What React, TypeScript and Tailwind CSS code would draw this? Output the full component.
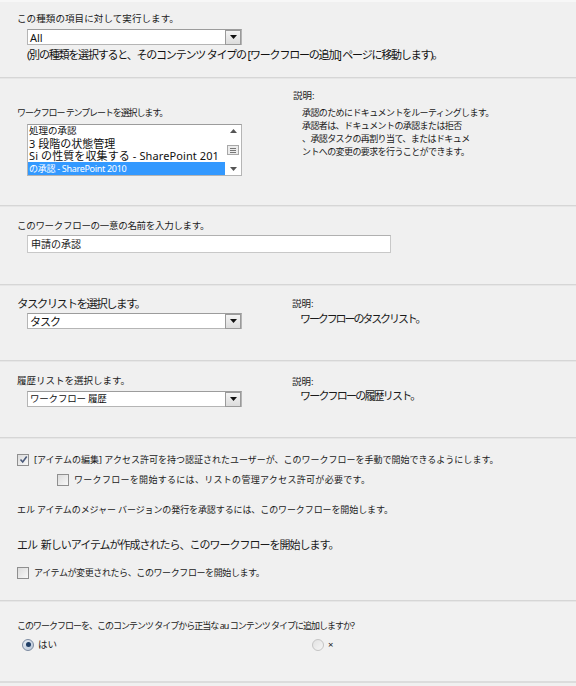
import React from "react";

const F = "font-['Noto_Sans','Noto_Sans_CJK_JP',sans-serif]";

function Sep() {
  return (
    <div className="h-[2px] border-t border-[#d6d6d6] border-b border-b-[#e6e6e6]" />
  );
}

function Arrow() {
  return (
    <div className="w-[16px] h-[15px] border border-[#9a9a9a] bg-gradient-to-b from-[#f4f4f4] to-[#dcdcdc] flex items-center justify-center">
      <svg width="7" height="4" viewBox="0 0 7 4">
        <path d="M0 0 H7 L3.5 4 Z" fill="#111" />
      </svg>
    </div>
  );
}

function Select({ text, cls = "" }: { text: string; cls?: string }) {
  return (
    <div className="w-[215px] h-[16px] flex items-center bg-white border border-[#b5b5b5] border-t-[#9c9c9c] pr-0">
      <span className={`flex-1 pl-[2px] text-[#111] leading-none ${cls}`}>{text}</span>
      <Arrow />
    </div>
  );
}

function Checkbox({ checked = false }: { checked?: boolean }) {
  return (
    <div className="w-[12px] h-[12px] border border-[#8f8f8f] bg-gradient-to-br from-[#dcdcdc] to-[#f8f8f8] flex items-center justify-center shrink-0">
      {checked && (
        <svg width="9" height="9" viewBox="0 0 9 9">
          <path d="M1.5 4.5 L3.7 7 L7.7 1.5" stroke="#4a5a7a" strokeWidth="1.6" fill="none" />
        </svg>
      )}
    </div>
  );
}

function Radio({ checked = false }: { checked?: boolean }) {
  return (
    <div
      className={`w-[12px] h-[12px] rounded-full border flex items-center justify-center ${
        checked
          ? "border-[#7c8aa0] bg-gradient-to-br from-[#e8eef6] to-[#b9c6d6]"
          : "border-[#c4c4c4] bg-gradient-to-br from-[#e2e2e2] to-[#f6f6f6]"
      }`}
    >
      {checked && <div className="w-[5px] h-[5px] rounded-full bg-[#1f3e66]" />}
    </div>
  );
}

export default function App() {
  return (
    <div className={`w-[576px] h-[686px] bg-[#f0f0f0] text-[#1a1a1a] ${F} overflow-hidden`}>
      <div className="h-[2px] bg-[#f7f7f7]" />
      {/* Section 1 */}
      <div className="h-[75px] pl-[17px] pt-[10px]">
        <div className="text-[9.5px] leading-[13px] tracking-[0.1px]">この種類の項目に対して実行します。</div>
        <div className="ml-[10px] mt-[4px]">
          <Select text="All" cls="text-[11px]" />
        </div>
        <div className="ml-[10px] mt-[2px] text-[11px] leading-[16px] tracking-[-1.2px] text-[#111] whitespace-nowrap">
          (別の種類を選択すると、そのコンテンツ タイプの [ワークフローの追加] ページに移動します)。
        </div>
      </div>
      <Sep />
      {/* Section 2 */}
      <div className="h-[126px] flex">
        <div className="w-[276px] pl-[17px] pt-[27px]">
          <div className="text-[9px] leading-[13px] tracking-[-1.1px] whitespace-nowrap">ワークフロー テンプレートを選択します。</div>
          <div className="ml-[10px] mt-[5px] w-[215px] h-[52px] bg-white border border-[#b5b5b5] border-t-[#9c9c9c] flex">
            <div className="flex-1 flex flex-col overflow-hidden text-[#111]">
              <div className="h-[12px] flex items-center overflow-hidden text-[9.5px] leading-none pl-[1px] whitespace-nowrap">処理の承認</div>
              <div className="h-[12px] flex items-center overflow-hidden text-[11px] leading-none pl-[1px] whitespace-nowrap">3 段階の状態管理</div>
              <div className="h-[13px] flex items-center overflow-hidden text-[11px] leading-none pl-[1px] tracking-[0.1px] whitespace-nowrap">Si の性質を収集する - SharePoint 201</div>
              <div className="h-[13px] flex items-center overflow-hidden bg-[#3399ff] text-white text-[9px] leading-none pl-[1px] tracking-[-0.3px] whitespace-nowrap">
                の承認 - SharePoint 2010
              </div>
            </div>
            <div className="w-[16px] flex flex-col items-center justify-between py-[4px]">
              <svg width="7" height="4" viewBox="0 0 7 4">
                <path d="M0 4 H7 L3.5 0 Z" fill="#555" />
              </svg>
              <div className="w-[12px] h-[10px] border border-[#a8a8a8] bg-[#ececec] flex flex-col items-center justify-center gap-[1px]">
                <div className="w-[6px] h-px bg-[#777]" />
                <div className="w-[6px] h-px bg-[#777]" />
                <div className="w-[6px] h-px bg-[#777]" />
              </div>
              <svg width="7" height="4" viewBox="0 0 7 4">
                <path d="M0 0 H7 L3.5 4 Z" fill="#555" />
              </svg>
            </div>
          </div>
        </div>
        <div className="pt-[10px] pl-[17px]">
          <div className="text-[9.5px] leading-[13px]">説明:</div>
          <div className="pl-[9px] mt-[4px] text-[9px] leading-[13px] tracking-[-0.6px]">
            <div>承認のためにドキュメントをルーティングします。</div>
            <div>承認者は、ドキュメントの承認または拒否</div>
            <div>、承認タスクの再割り当て、またはドキュメ</div>
            <div>ントへの変更の要求を行うことができます。</div>
          </div>
        </div>
      </div>
      <Sep />
      {/* Section 3 */}
      <div className="h-[77px] pl-[17px] pt-[12px]">
        <div className="text-[9.5px] leading-[13px] tracking-[-0.3px]">このワークフローの一意の名前を入力します。</div>
        <div className="ml-[10px] mt-[3px] w-[364px] h-[18px] bg-white border border-[#c8c8c8] border-t-[#b0b0b0] flex items-center">
          <span className="pl-[3px] text-[10px] leading-none">申請の承認</span>
        </div>
      </div>
      <Sep />
      {/* Section 4 */}
      <div className="h-[74px] flex">
        <div className="w-[275px] pl-[17px] pt-[10px]">
          <div className="text-[11.5px] leading-[16px] tracking-[-1.6px]">タスクリストを選択します。</div>
          <div className="ml-[10px] mt-[1px]">
            <Select text="タスク" cls="text-[11px] tracking-[-1px]" />
          </div>
        </div>
        <div className="pl-[17px] pt-[11px]">
          <div className="text-[9.5px] leading-[13px]">説明:</div>
          <div className="pl-[8px] mt-[2px] text-[11px] leading-[14px] tracking-[-2.1px] whitespace-nowrap">ワークフローのタスクリスト。</div>
        </div>
      </div>
      <Sep />
      {/* Section 5 */}
      <div className="h-[75px] flex">
        <div className="w-[275px] pl-[17px] pt-[12px]">
          <div className="text-[9.5px] leading-[13px] tracking-[0px]">履歴リストを選択します。</div>
          <div className="ml-[10px] mt-[4px]">
            <Select text="ワークフロー 履歴" cls="text-[9.5px] tracking-[-0.2px]" />
          </div>
        </div>
        <div className="pl-[17px] pt-[13px]">
          <div className="text-[9.5px] leading-[13px]">説明:</div>
          <div className="pl-[8px] mt-[1px] text-[11px] leading-[14px] tracking-[-1.8px] whitespace-nowrap">ワークフローの履歴リスト。</div>
        </div>
      </div>
      <Sep />
      {/* Section 6 */}
      <div className="h-[161px] pl-[17px] pt-[14px]">
        <div className="flex items-center gap-[5px] h-[13px]">
          <Checkbox checked />
          <span className="text-[9px] leading-[13px] tracking-[0px] whitespace-nowrap">
            [アイテムの編集] アクセス許可を持つ認証されたユーザーが、このワークフローを手動で開始できるようにします。
          </span>
        </div>
        <div className="flex items-center gap-[5px] h-[13px] mt-[7px] ml-[40px]">
          <Checkbox />
          <span className="text-[9px] leading-[13px] tracking-[0.3px] whitespace-nowrap">
            ワークフローを開始するには、リストの管理アクセス許可が必要です。
          </span>
        </div>
        <div className="mt-[17px] text-[9px] leading-[13px] tracking-[-0.1px] whitespace-nowrap">
          エル アイテムのメジャー バージョンの発行を承認するには、このワークフローを開始します。
        </div>
        <div className="mt-[21px] text-[11px] leading-[16px] tracking-[-1px] whitespace-nowrap">
          エル&nbsp; 新しいアイテムが作成されたら、このワークフローを開始します。
        </div>
        <div className="flex items-center gap-[5px] h-[13px] mt-[13px]">
          <Checkbox />
          <span className="text-[9px] leading-[13px] tracking-[-0.4px] whitespace-nowrap">
            アイテムが変更されたら、このワークフローを開始します。
          </span>
        </div>
      </div>
      <Sep />
      {/* Section 7 */}
      <div className="h-[79px] pl-[17px] pt-[17px] bg-[#f1f1f1]">
        <div className="text-[9px] leading-[13px] tracking-[-1px] whitespace-nowrap">
          このワークフローを、このコンテンツ タイプから正当な au コンテンツ タイプに追加しますか?
        </div>
        <div className="flex mt-[6px] h-[13px] items-center">
          <div className="w-[295px] pl-[5px] flex items-center gap-[4px]">
            <Radio checked />
            <span className="text-[9.5px] leading-[13px]">はい</span>
          </div>
          <div className="flex items-center gap-[4px]">
            <Radio />
            <span className="text-[9.5px] leading-[13px]">×</span>
          </div>
        </div>
      </div>
      <div className="h-[2px] bg-[#dcdcdc]" />
    </div>
  );
}
